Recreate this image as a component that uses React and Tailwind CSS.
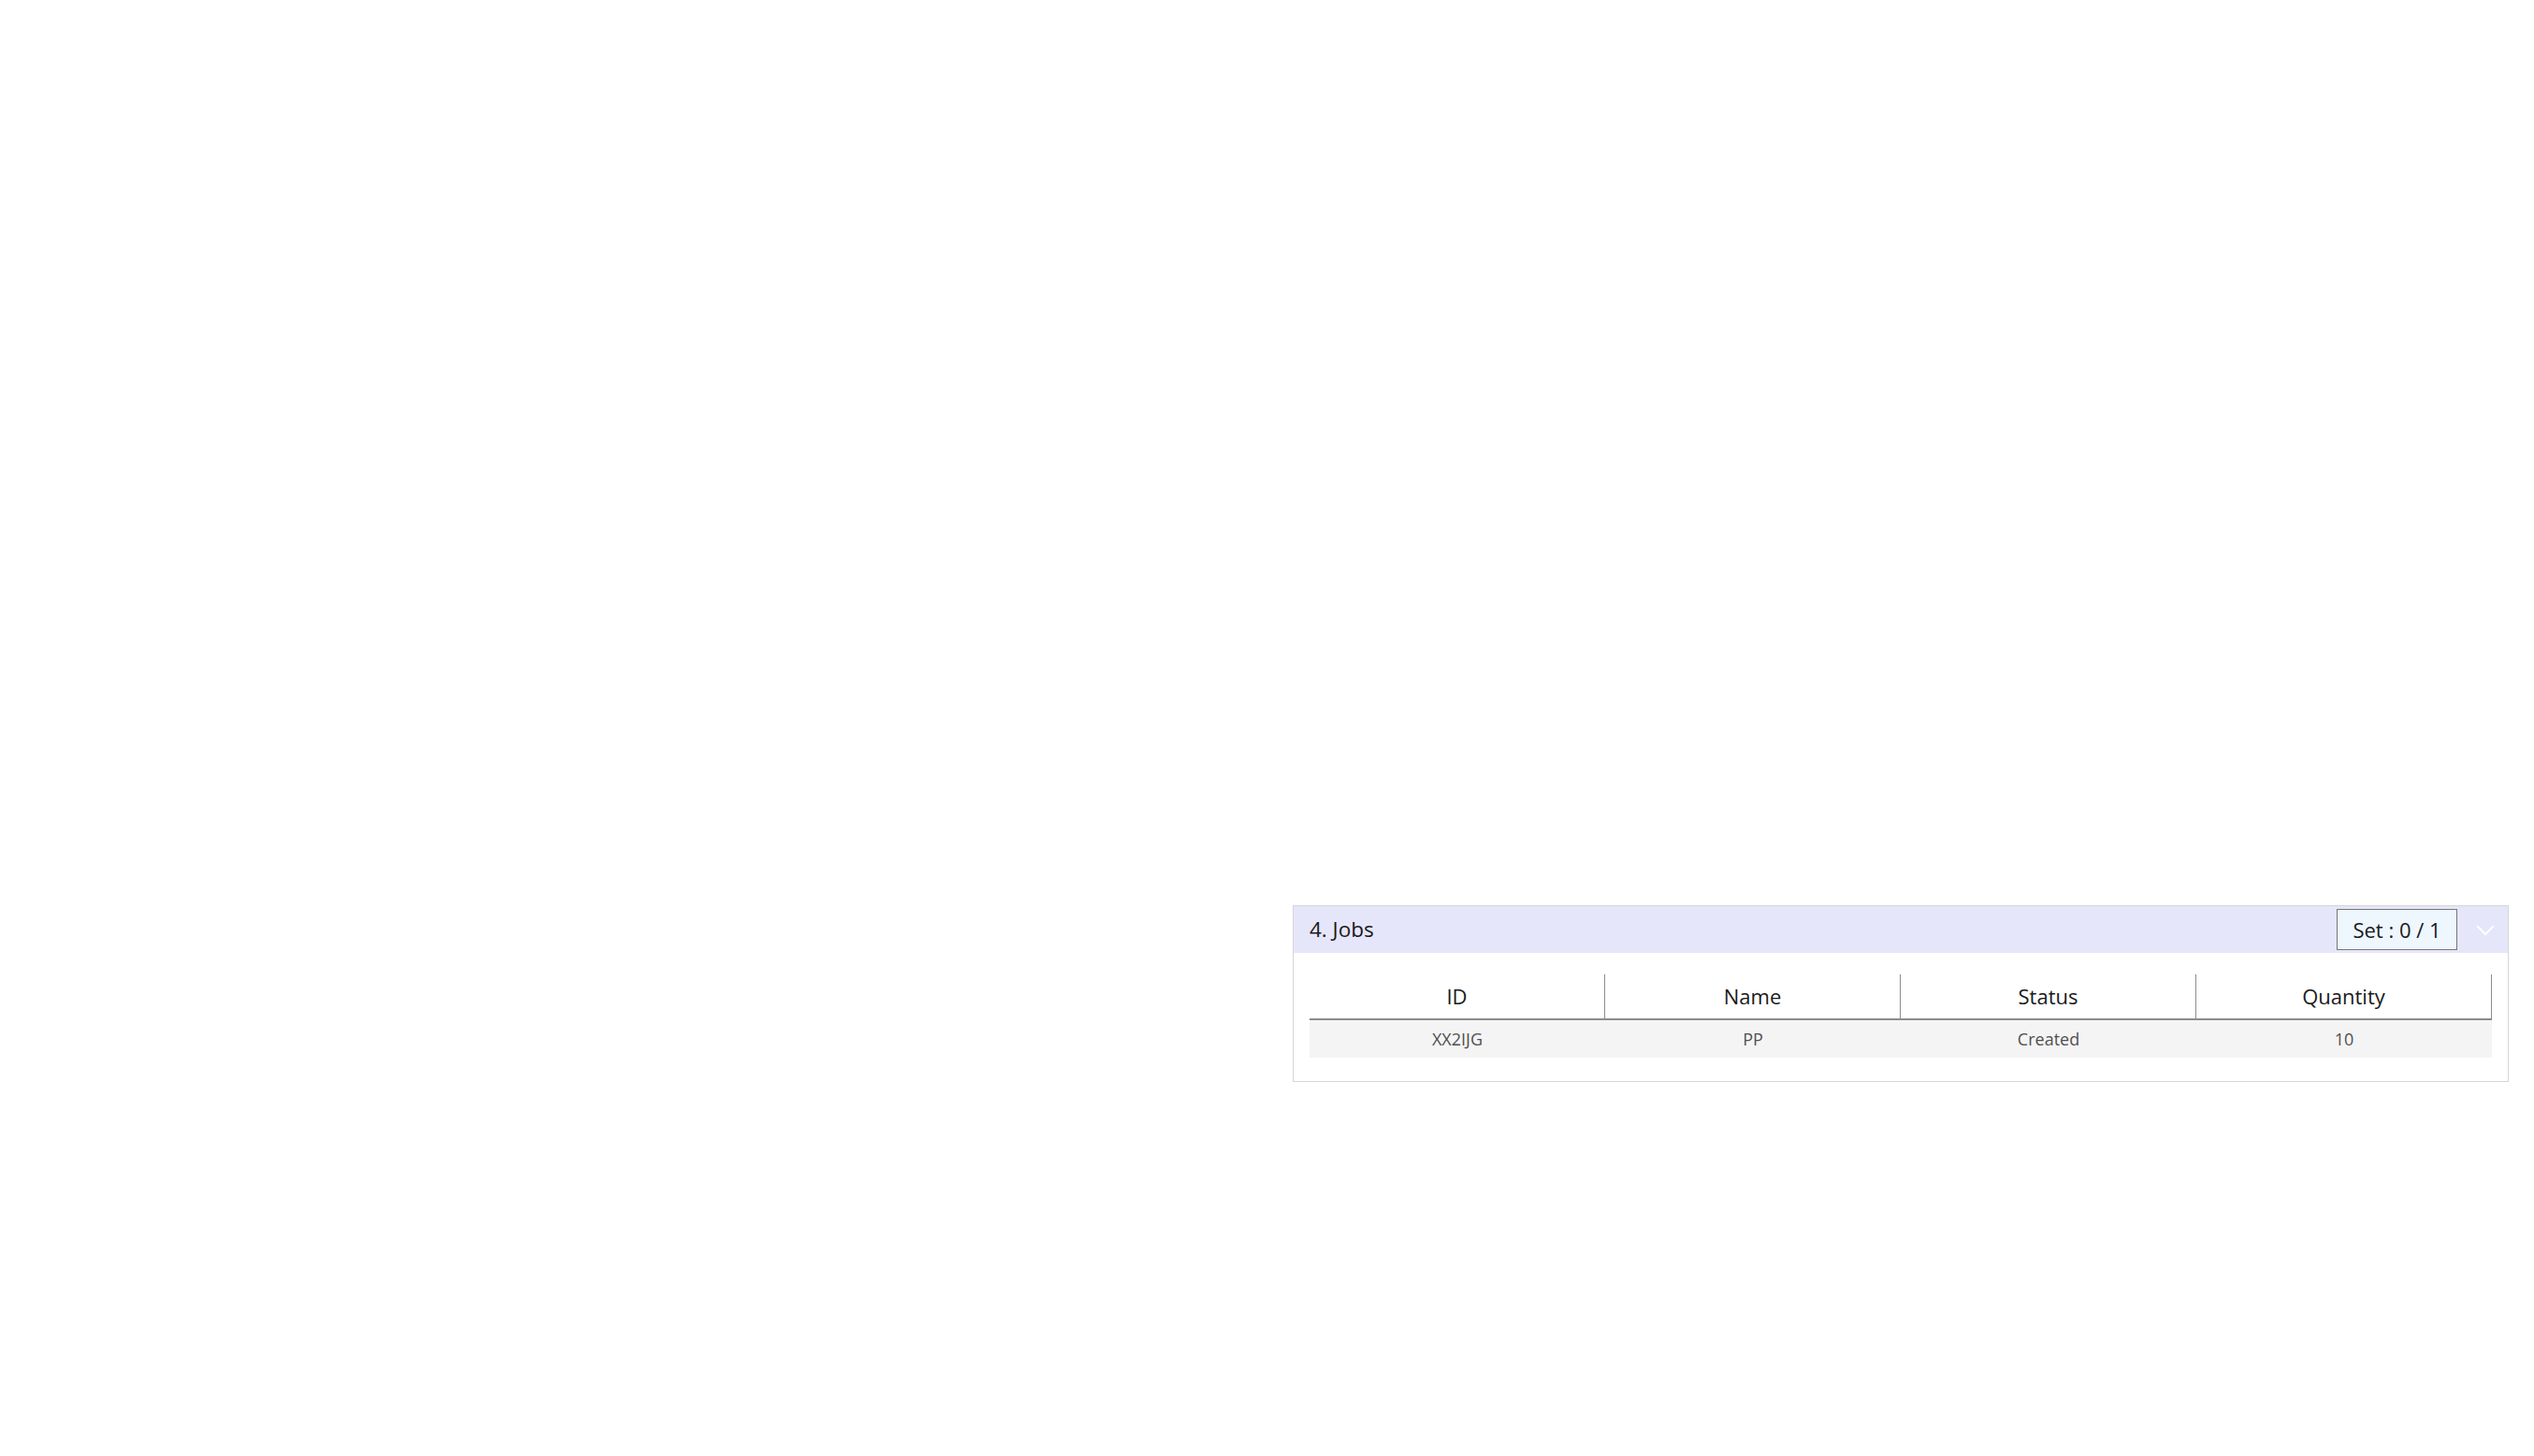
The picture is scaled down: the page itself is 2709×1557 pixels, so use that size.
import React from 'react';

const columns = ['ID', 'Name', 'Status', 'Quantity'];
const rows = [{ id: 'XX2IJG', name: 'PP', status: 'Created', quantity: '10' }];

export default function App() {
  return (
    <div className="min-h-screen w-full bg-white font-['Open_Sans','Noto_Sans',sans-serif]">
      <div className="flex justify-end pt-[968px] pr-[27px]">
        {/* Jobs panel */}
        <div className="w-[1300px] border border-[#d6d6d6] bg-white">
          <div className="flex h-[50px] items-center bg-[#e6e6fa] pl-[17px] pr-[14px]">
            <span className="text-[22.5px] text-[#1a1a1a]">4. Jobs</span>
            <button className="ml-auto flex h-[44px] w-[129px] items-center justify-center border border-[#767676] bg-[#eef6fe] text-[22px] text-[#1a1a1a]">
              Set : 0 / 1
            </button>
            <svg className="ml-[20px] h-[20px] w-[20px]" viewBox="0 0 20 20" fill="none">
              <path d="M1 6 L10 15 L19 6" stroke="#ffffff" strokeWidth="2" />
            </svg>
          </div>

          <div className="pl-[17px] pr-[17px] pt-[23px] pb-[25px]">
            <div className="grid grid-cols-4 border-b-2 border-[#8c8c8c]">
              {columns.map((c) => (
                <div
                  key={c}
                  className="flex h-[47px] items-center justify-center border-r border-[#8c8c8c] text-[22px] text-[#1a1a1a]"
                >
                  {c}
                </div>
              ))}
            </div>
            {rows.map((r) => (
              <div key={r.id} className="grid h-[40px] grid-cols-4 bg-[#f4f4f4] text-[18px] text-[#505050]">
                <div className="flex items-center justify-center">{r.id}</div>
                <div className="flex items-center justify-center">{r.name}</div>
                <div className="flex items-center justify-center">{r.status}</div>
                <div className="flex items-center justify-center">{r.quantity}</div>
              </div>
            ))}
          </div>
        </div>
      </div>
    </div>
  );
}
